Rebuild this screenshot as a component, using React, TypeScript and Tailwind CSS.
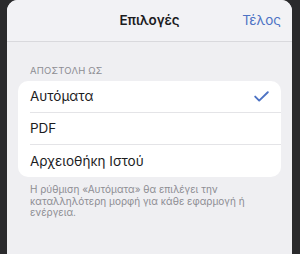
import React from 'react';

const options = ['Αυτόματα', 'PDF', 'Αρχειοθήκη Ιστού'];

export default function App() {
  const selected = 0;

  return (
    <div className="h-[254px] w-[300px] overflow-hidden bg-[#2a2a2c] pl-[7px] pr-[8px] font-['Inter',sans-serif]">
      <div className="h-full rounded-t-[11px] bg-[#efeff2]">
        {/* Header */}
        <div className="grid h-[42px] grid-cols-[1fr_auto_1fr] items-center border-b border-[#d9d9dd] bg-[#f2f2f5] rounded-t-[11px]">
          <div />
          <div className="text-[13.5px] font-semibold tracking-[-0.1px] text-[#1c1c1e]">Επιλογές</div>
          <div className="pr-[11px] text-right text-[13.5px] text-[#4e73c4]">Τέλος</div>
        </div>

        <div className="px-[11px]">
          <div className="mt-[23px] pl-[12px] text-[9.5px] leading-[12px] tracking-[0.2px] text-[#8d8d92]">
            ΑΠΟΣΤΟΛΗ ΩΣ
          </div>

          {/* Options card */}
          <div className="mt-[4px] overflow-hidden rounded-[10px] bg-white">
            {options.map((opt, i) => (
              <div key={opt} className="flex h-[32px] items-stretch pl-[12px]">
                <div
                  className={`flex flex-1 items-center justify-between pr-[12px] ${
                    i < options.length - 1 ? 'border-b border-[#e4e4e7]' : ''
                  }`}
                >
                  <span className="text-[13.5px] text-[#1c1c1e]">{opt}</span>
                  {i === selected && (
                    <svg width="15" height="11" viewBox="0 0 15 11" fill="none">
                      <path
                        d="M1.2 5.6 L5.2 9.6 L13.8 1.2"
                        stroke="#4e73c4"
                        strokeWidth="1.9"
                        strokeLinecap="round"
                        strokeLinejoin="round"
                      />
                    </svg>
                  )}
                </div>
              </div>
            ))}
          </div>

          <p className="mt-[7px] pl-[12px] pr-[20px] text-[10px] leading-[11.5px] text-[#8d8d92]">
            Η ρύθμιση «Αυτόματα» θα επιλέγει την καταλληλότερη μορφή για κάθε εφαρμογή ή ενέργεια.
          </p>
        </div>
      </div>
    </div>
  );
}
